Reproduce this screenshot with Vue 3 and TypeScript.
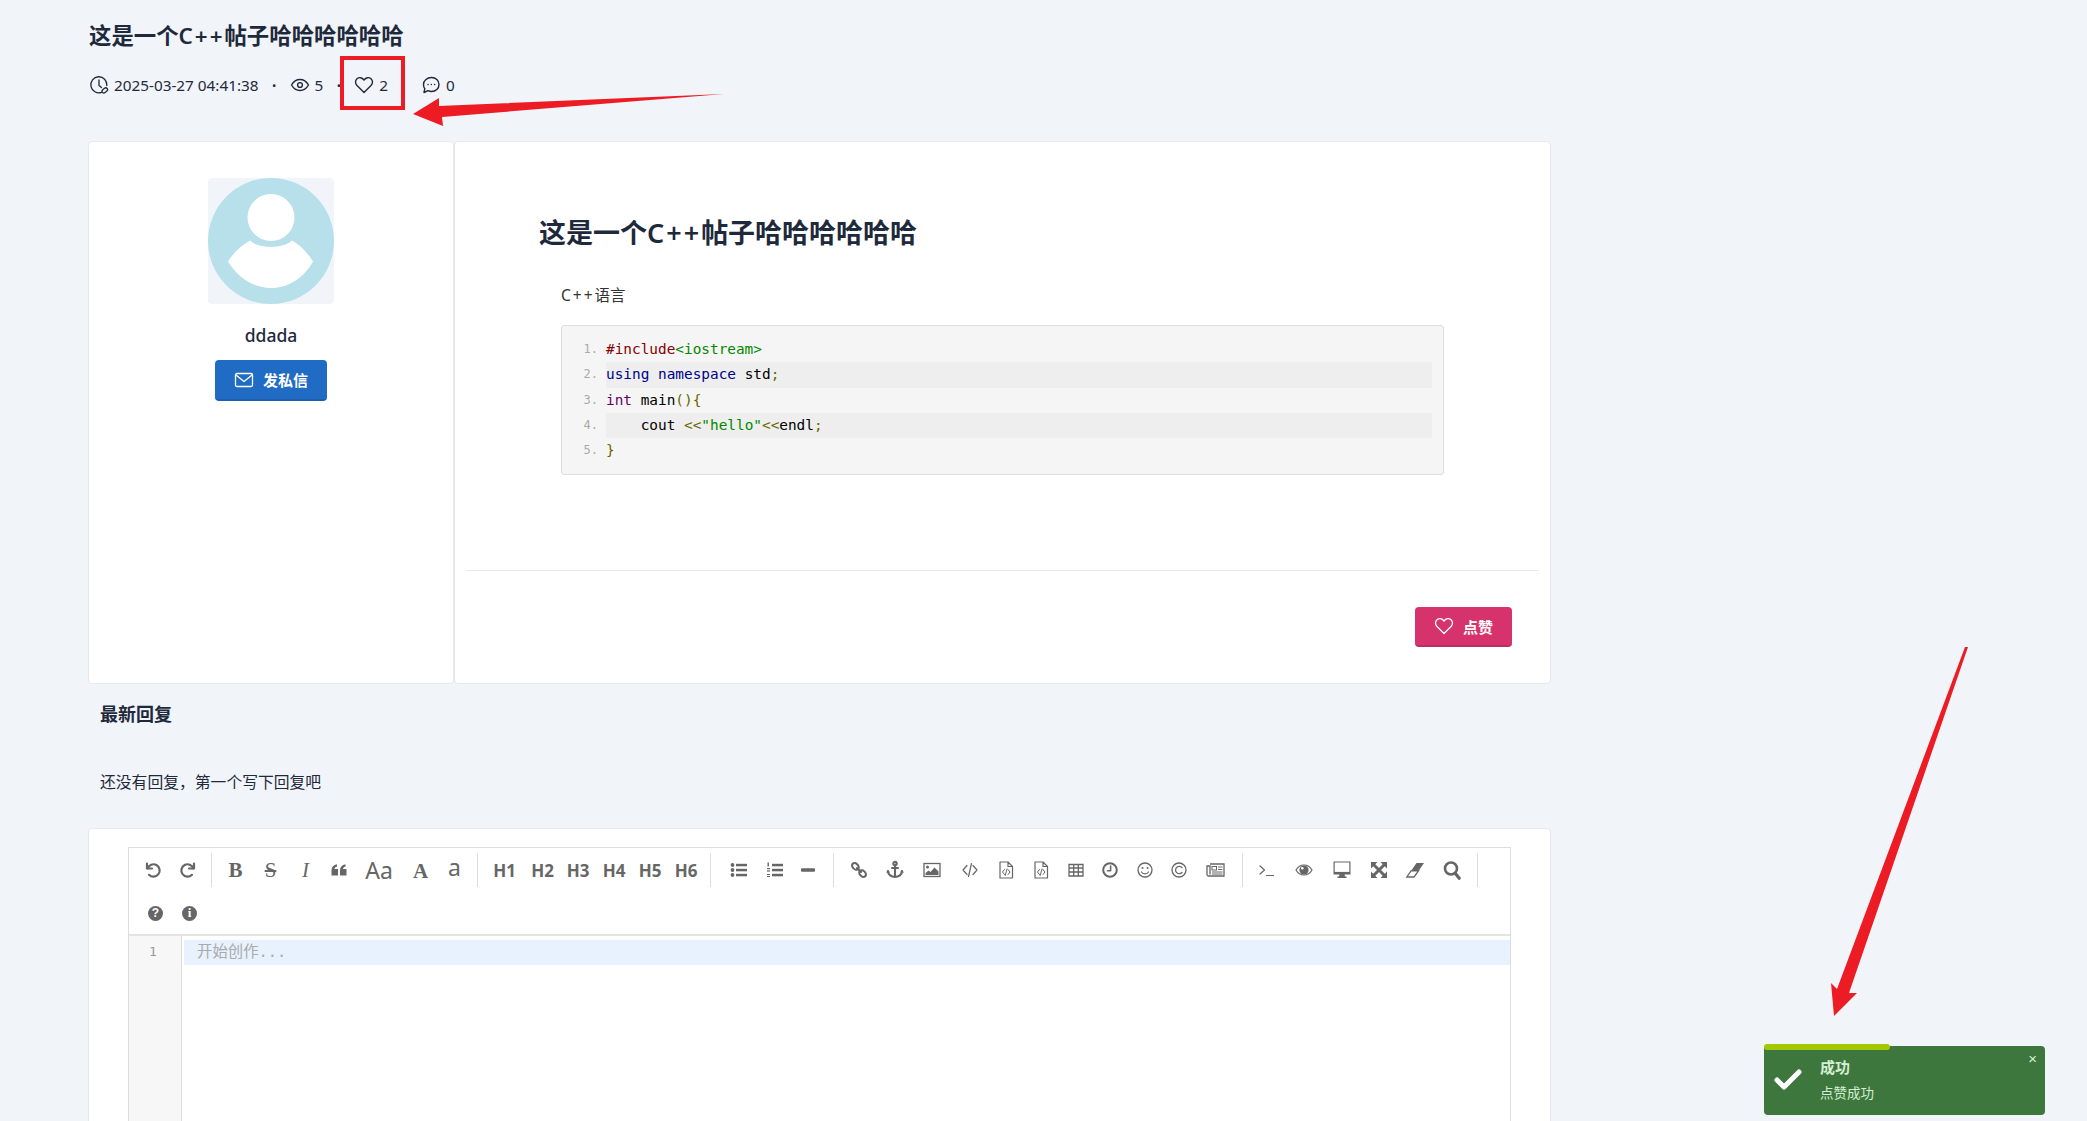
<script setup lang="ts">
interface Tool { w: number; kind: 'svg' | 'text' | 'sep'; cls?: string; label?: string; svg?: string }

const s = (w: number, svg: string): Tool => ({ w, kind: 'svg', svg })
const t = (w: number, label: string, cls: string): Tool => ({ w, kind: 'text', label, cls })
const sep: Tool = { w: 1, kind: 'sep' }

const line = 'fill="none" stroke="#666" stroke-linecap="round" stroke-linejoin="round"'
const tools: Tool[] = [
  s(35, `<path ${line} stroke-width="2.2" d="M4 3.5v5h5"/><path ${line} stroke-width="2.2" d="M4.6 8.4A6.2 6.2 0 1 1 6 14.8"/>`),
  s(35, `<path ${line} stroke-width="2.2" d="M16 3.5v5h-5"/><path ${line} stroke-width="2.2" d="M15.4 8.4A6.2 6.2 0 1 0 14 14.8"/>`),
  sep,
  t(35, 'B', 'serif bold'),
  t(35, 'S', 'serif strike'),
  t(35, 'I', 'serif italic'),
  s(32, `<path fill="#666" d="M2.5 10.5C2.5 7 4.5 4.8 8 4.2v2.2C6.3 7 5.6 7.8 5.5 9H9v6.5H2.5zM11 10.5C11 7 13 4.8 16.5 4.2v2.2c-1.7.6-2.4 1.4-2.5 2.6h3.5v6.5H11z"/>`),
  t(48, 'Aa', 'big'),
  t(35, 'A', 'serif bold upper'),
  t(33, 'a', 'big low'),
  sep,
  t(41, 'H1', 'head'),
  t(35, 'H2', 'head'),
  t(36, 'H3', 'head'),
  t(36, 'H4', 'head'),
  t(36, 'H5', 'head'),
  t(36, 'H6', 'head'),
  sep,
  s(44, `<g fill="#666"><circle cx="3.5" cy="5" r="1.9"/><circle cx="3.5" cy="10" r="1.9"/><circle cx="3.5" cy="15" r="1.9"/><rect x="7" y="3.8" width="11" height="2.5"/><rect x="7" y="8.8" width="11" height="2.5"/><rect x="7" y="13.8" width="11" height="2.5"/></g>`),
  s(28, `<g fill="#666"><rect x="2.5" y="2.5" width="1.4" height="4"/><rect x="2" y="8" width="3" height="1.2"/><rect x="2" y="10.4" width="3" height="1.2"/><rect x="2" y="14" width="3" height="1"/><rect x="2" y="16" width="3" height="1"/><rect x="7" y="3.8" width="11" height="2.5"/><rect x="7" y="8.8" width="11" height="2.5"/><rect x="7" y="13.8" width="11" height="2.5"/></g>`),
  s(38, `<rect x="3" y="8.2" width="14" height="3.6" rx="1" fill="#666"/>`),
  sep,
  s(38, `<g ${line} stroke-width="2.1"><ellipse cx="6.4" cy="6.4" rx="3.8" ry="2.8" transform="rotate(45 6.4 6.4)"/><ellipse cx="13.6" cy="13.6" rx="3.8" ry="2.8" transform="rotate(45 13.6 13.6)"/><path d="M8 8l4 4"/></g>`),
  s(34, `<g ${line} stroke-width="2.1"><circle cx="10" cy="3.6" r="1.7"/><path d="M10 5.5V17M7 8h6M3 11c0 3.8 3.4 6 7 6s7-2.200 7-6"/></g><path fill="#666" d="M1 12.500 3 10l2 2.500zM15 12.500 17 10l2 2.500z"/>`),
  s(40, `<rect x="2" y="3.500" width="16" height="13" fill="#fff" stroke="#666" stroke-width="1.300"/><circle cx="5.500" cy="7" r="1.500" fill="#666"/><path fill="#666" d="M3.500 15v-2l3-2.500 2 1.500 4-4.500 4 4V15z"/>`),
  s(36, `<path ${line} stroke-width="1.200" d="M7 5.500 3 10l4 4.500M13 5.500l4 4.500-4 4.500M11.500 3.500l-3 13"/>`),
  s(36, `<path ${line} stroke-width="1.200" d="M4 2h8l4.500 4.500V18H4zM12 2v4.500h4.500"/><path ${line} stroke-width="1" d="M8.500 9.500 6.500 12l2 2.500M12 9.500l2 2.500-2 2.500M11 9l-1.800 6.500"/>`),
  s(34, `<path ${line} stroke-width="1.200" d="M4 2h8l4.500 4.500V18H4zM12 2v4.500h4.500"/><path ${line} stroke-width="1" d="M8.500 9.500 6.500 12l2 2.500M12 9.500l2 2.500-2 2.500M11 9l-1.800 6.500"/>`),
  s(36, `<path fill="none" stroke="#666" stroke-width="1.300" d="M3 4.500h14v11.500H3zM3 8h14M3 12h14M7.700 4.500V16M12.300 4.500V16"/>`),
  s(32, `<circle cx="10" cy="10" r="6.800" fill="none" stroke="#666" stroke-width="2"/><path ${line} stroke-width="1.600" d="M10.600 6v4.800H7.500"/>`),
  s(38, `<circle cx="10" cy="10" r="7" fill="none" stroke="#666" stroke-width="1.300"/><circle cx="7.500" cy="8" r="1" fill="#666"/><circle cx="12.500" cy="8" r="1" fill="#666"/><path ${line} stroke-width="1.200" d="M6.500 12c1.500 2.500 5.500 2.500 7 0"/>`),
  s(30, `<circle cx="10" cy="10" r="7" fill="none" stroke="#666" stroke-width="1.300"/><path ${line} stroke-width="1.300" d="M13 7.500a3.700 3.700 0 1 0 0 5"/>`),
  s(42, `<path fill="none" stroke="#666" stroke-width="1.300" d="M5 4h14v12H3.500A1.500 1.500 0 0 1 2 14.500V6h3v8.500"/><rect x="7" y="6.500" width="4.500" height="3.500" fill="none" stroke="#666"/><path stroke="#666" d="M13 7h4.500M13 9.500h4.500M7 12h10.500M7 14h10.500"/>`),
  sep,
  s(36, `<path ${line} stroke-width="1.200" d="M3 6l4.500 4L3 14M9.500 15.500h7"/>`),
  s(38, `<path fill="none" stroke="#666" stroke-width="1.200" d="M2 10C4 6.500 7 5 10 5s6 1.500 8 5c-2 3.500-5 5-8 5s-6-1.500-8-5z"/><circle cx="10" cy="10" r="4.600" fill="#666"/><circle cx="8.300" cy="8.300" r="1.300" fill="#fff"/>`),
  s(38, `<path fill="#666" d="M1.500 1.500h17v13h-17zM7.500 14.500h5l.5 2h1.500v1.500h-9v-1.500H7z"/><rect x="2.700" y="2.500" width="14.600" height="9.400" fill="#fff"/>`),
  s(36, `<g fill="#666"><path d="M2 2h6.500L2 8.500zM18 2v6.500L11.500 2zM2 18v-6.500L8.500 18zM18 18h-6.500L18 11.500z"/></g><path stroke="#666" stroke-width="3" d="M4.500 4.500l11 11M15.500 4.500l-11 11"/>`),
  s(36, `<path fill="#666" d="M11.500 3H19l-5.500 8H6z"/><path fill="none" stroke="#666" stroke-width="1.300" d="M6 10.800h7.500L9 17H1.800z"/>`),
  s(38, `<circle cx="9" cy="8.500" r="6" fill="none" stroke="#666" stroke-width="2.600"/><path stroke="#666" stroke-width="3.200" stroke-linecap="round" d="M13.200 13.200l4 5"/>`),
  sep,
  t(41, '?', 'badge'),
  t(27, 'i', 'badge serif-i'),
]

interface Tok { c: string; x: string }
const code: Tok[][] = [
  [{ c: 'dec', x: '#include' }, { c: 'str', x: '<iostream>' }],
  [{ c: 'kw', x: 'using' }, { c: 'pln', x: ' ' }, { c: 'kw', x: 'namespace' }, { c: 'pln', x: ' std' }, { c: 'pun', x: ';' }],
  [{ c: 'typ', x: 'int' }, { c: 'pln', x: ' main' }, { c: 'pun', x: '(){' }],
  [{ c: 'pln', x: '    cout ' }, { c: 'pun', x: '<<' }, { c: 'str', x: '"hello"' }, { c: 'pun', x: '<<' }, { c: 'pln', x: 'endl' }, { c: 'pun', x: ';' }],
  [{ c: 'pun', x: '}' }],
]
</script>

<template>
  <div class="page">
    <header class="head-block">
      <h2 class="post-title">这是一个<span class="latin">C++</span>帖子哈哈哈哈哈哈</h2>
      <div class="meta">
        <span class="meta-item first">
          <svg class="mi" viewBox="0 0 20 20" fill="none" stroke="#1f2937" stroke-width="1.300" stroke-linecap="round"><path d="M12.500 17.300A8 8 0 1 1 17.800 10.500"/><path d="M10 5v5.500l2.500 2"/><rect x="12.800" y="13.600" width="6" height="3.600" rx="1.800" transform="rotate(-40 15.800 15.400)"/></svg>
          2025-03-27 04:41:38
        </span>
        <span class="dot">·</span>
        <span class="meta-item">
          <svg class="mi" viewBox="0 0 20 20" fill="none" stroke="#1f2937" stroke-width="1.400"><path d="M1.500 10C3.500 6.500 6.500 4.500 10 4.500S16.500 6.500 18.500 10c-2 3.500-5 5.500-8.500 5.500S3.500 13.500 1.500 10z"/><circle cx="10" cy="10" r="2.400"/></svg>
          5
        </span>
        <span class="dot">·</span>
        <span class="meta-item liked">
          <svg class="mi heart" viewBox="0 0 20 20" fill="none" stroke="#1f2937" stroke-width="1.400" stroke-linejoin="round"><path d="M10 17.500 3 10.500C1 8.500 1 5.500 3 3.700 5 2 8 2.300 10 5c2-2.700 5-3 7-1.300 2 1.800 2 4.800 0 6.800z"/></svg>
          2
        </span>
        <span class="meta-item last">
          <svg class="mi" viewBox="0 0 20 20" fill="none" stroke="#1f2937" stroke-width="1.400" stroke-linejoin="round"><path d="M10.500 2.500c4.300 0 7.500 3 7.500 7s-3.200 7-7.500 7c-1.300 0-2.400-.3-3.500-.8L3 17.500l.8-3.800C2.700 12.500 2.500 11 2.500 9.500c0-4 3.700-7 8-7z"/><path stroke-linecap="round" d="M7 9.500h.1M10.300 9.500h.1M13.600 9.500h.1"/></svg>
          0
        </span>
      </div>
    </header>

    <section class="post">
      <aside class="card author">
        <div class="avatar">
          <svg viewBox="0 0 126 126" width="126" height="126">
            <circle cx="63" cy="63" r="63" fill="#b8e0ea" />
            <circle cx="63" cy="39.500" r="23.500" fill="#fff" />
            <path fill="#fff" d="M42 62.500C50 71 76 71 84 62.500 92 67 99 74 105 83.500 96 100 80 110 63 110S30 100 20 83.500C26 74 34 67 42 62.500z" />
          </svg>
        </div>
        <div class="author-name">ddada</div>
        <button class="btn btn-blue" type="button">
          <svg class="bi" viewBox="0 0 20 20" fill="none" stroke="#fff" stroke-width="1.300" stroke-linejoin="round"><rect x="1.500" y="3.500" width="17" height="13" rx="1.500"/><path d="M2 5l8 6.500L18 5"/></svg>
          发私信
        </button>
      </aside>

      <article class="card content">
        <div class="md">
          <h1 class="md-title">这是一个<span class="latin">C++</span>帖子哈哈哈哈哈哈</h1>
          <p class="md-p"><span class="latin">C++</span>语言</p>
          <ol class="code">
            <li v-for="(row, i) in code" :key="i" class="code-row">
              <span class="ln">{{ i + 1 }}.</span>
              <span class="src"><span v-for="(tok, j) in row" :key="j" :class="tok.c">{{ tok.x }}</span></span>
            </li>
          </ol>
        </div>
        <div class="actions">
          <button class="btn btn-pink" type="button">
            <svg class="bi" viewBox="0 0 20 20" fill="none" stroke="#fff" stroke-width="1.300" stroke-linejoin="round"><path d="M10 17.500 3 10.500C1 8.500 1 5.500 3 3.700 5 2 8 2.300 10 5c2-2.700 5-3 7-1.300 2 1.800 2 4.800 0 6.800z"/></svg>
            点赞
          </button>
        </div>
      </article>
    </section>

    <h3 class="reply-title">最新回复</h3>
    <p class="reply-empty">还没有回复，第一个写下回复吧</p>

    <section class="card editor-card">
      <div class="editor">
        <div class="toolbar">
          <template v-for="(tool, i) in tools" :key="i">
            <span v-if="tool.kind === 'sep'" class="sep"></span>
            <span v-else class="tool" :style="{ width: tool.w + 'px' }">
              <svg v-if="tool.kind === 'svg'" class="ti" viewBox="0 0 20 20" v-html="tool.svg"></svg>
              <span v-else :class="tool.cls">{{ tool.label }}</span>
            </span>
          </template>
        </div>
        <div class="cm">
          <div class="gutter">1</div>
          <div class="lines">
            <div class="active">开始创作...</div>
          </div>
        </div>
      </div>
    </section>

    <div class="toast">
      <div class="progress"></div>
      <svg class="check" viewBox="0 0 28 22" fill="none" stroke="#fff" stroke-width="5" stroke-linecap="round" stroke-linejoin="round"><path d="M3 12l7 7L25 4"/></svg>
      <div class="toast-body">
        <div class="toast-title">成功</div>
        <div class="toast-msg">点赞成功</div>
      </div>
      <span class="toast-close">×</span>
    </div>

    <svg class="marks" width="2087" height="1121" viewBox="0 0 2087 1121">
      <rect x="342" y="58" width="61" height="50" fill="none" stroke="#ed1c24" stroke-width="4" />
      <polygon fill="#ed1c24" points="724,94 439,106 439,98 413,114 443,126 442,117" />
      <polygon fill="#ed1c24" points="1965,647 1968,647 1849,993 1857,993 1834,1016 1831,983 1837,989" />
    </svg>
  </div>
</template>

<style>
html, body { margin: 0; background: #f1f4f9; overflow: hidden; }
</style>

<style scoped>
.page {
  position: relative;
  height: 1121px;
  overflow: hidden;
  box-sizing: border-box;
  padding: 0 536px 0 88px;
  background: #f1f4f9;
  color: #1e293b;
  font-family: "Noto Sans", "Noto Sans CJK SC", sans-serif;
}
.head-block { height: 141px; box-sizing: border-box; padding: 20px 0 0 1px; }
.post-title { margin: 0; font-size: 22.400px; line-height: 32px; font-weight: 700; }
.post-title .latin, .md-title .latin { letter-spacing: 2px; font-weight: 600; }
.md-p .latin { letter-spacing: 2px; }
.meta { display: flex; align-items: center; margin-top: 19px; height: 28px; font-size: 15.300px; }
.meta-item { display: flex; align-items: center; gap: 5px; }
.mi { width: 20px; height: 20px; }
.dot { width: 31px; text-align: center; font-weight: 700; }
.last { margin-left: 33px; }
.post { display: grid; grid-template-columns: 366px 1fr; height: 543px; }
.card {
  box-sizing: border-box;
  background: #fff;
  border: 1px solid #e5e8ee;
  border-radius: 4px;
}
.author { display: flex; flex-direction: column; align-items: center; padding-top: 36px; }
.avatar { width: 126px; height: 126px; background: #f1f4f9; border-radius: 4px; }
.avatar svg { display: block; }
.author-name { margin-top: 17px; font-size: 17.500px; line-height: 28px; font-weight: 500; }
.btn {
  display: flex;
  align-items: center;
  justify-content: center;
  gap: 9px;
  box-sizing: border-box;
  border: 0;
  border-radius: 4px;
  color: #fff;
  font-family: inherit;
  font-size: 15px;
  font-weight: 700;
  padding: 0;
}
.bi { width: 20px; height: 20px; }
.btn-blue {
  margin-top: 11px;
  width: 112px;
  height: 41px;
  background: #206bc4;
  border-bottom: 2px solid #1c60b0;
}
.content { display: flex; flex-direction: column; padding: 0 11px; }
.md { height: 429px; box-sizing: border-box; padding: 69px 0 0 73px; border-bottom: 1px solid #e6e8eb; }
.md-title { margin: 0; font-size: 27px; line-height: 44px; font-weight: 700; color: #1e293b; }
.md-p { margin: 27px 0 0 22px; font-size: 15.500px; line-height: 26px; color: #333; }
.code {
  list-style: none;
  box-sizing: border-box;
  margin: 17px 0 0 22px;
  width: 883px;
  height: 150px;
  padding: 11px 11px 0 0;
  background: #f5f5f5;
  border: 1px solid #ddd;
  border-radius: 3px;
  font-family: "DejaVu Sans Mono", monospace;
  font-size: 14.400px;
}
.code-row { display: flex; height: 25.300px; line-height: 25.300px; }
.ln { width: 44px; flex: none; padding-right: 8px; box-sizing: border-box; text-align: right; font-size: 12px; color: #aaa; }
.src { flex: 1; white-space: pre; padding-left: 0; }
.code-row:nth-child(even) .src { background: #eee; }
.dec { color: #800; }
.str { color: #080; }
.kw { color: #008; }
.typ { color: #606; }
.pln { color: #000; }
.pun { color: #660; }
.actions { display: flex; justify-content: flex-end; padding: 36px 27px 0 0; }
.btn-pink {
  width: 97px;
  height: 40px;
  background: #d6336c;
  border-bottom: 2px solid #bf2d60;
}
.reply-title { margin: 17px 0 0 12px; font-size: 18px; line-height: 26px; font-weight: 700; }
.reply-empty { margin: 42px 0 0 12px; font-size: 15.800px; line-height: 26px; color: #1e293b; }
.editor-card { margin-top: 33px; padding: 18px 39px 0; height: 600px; }
.editor { border: 1px solid #ddd; height: 100%; box-sizing: border-box; }
.toolbar {
  display: flex;
  flex-wrap: wrap;
  align-items: center;
  align-content: flex-start;
  height: 88px;
  box-sizing: border-box;
  padding: 5px 0 0 6px;
  border-bottom: 2px solid #e4e4e4;
  color: #666;
}
.sep { width: 1px; height: 34px; margin: 0 6px 9px; background: #ddd; flex: none; }
.tool { display: flex; align-items: center; justify-content: center; height: 34px; flex: none; margin-bottom: 9px; }
.ti { width: 20px; height: 20px; }
.serif { font-family: "Liberation Serif", serif; font-size: 21px; color: #666; }
.bold { font-weight: 700; }
.strike { text-decoration: line-through; }
.italic { font-style: italic; }
.big { font-family: "Noto Sans", sans-serif; font-size: 23px; color: #666; }
.upper { font-size: 21px; position: relative; top: 1px; }
.low { position: relative; top: -3px; }
.head { font-family: "Noto Sans", sans-serif; font-size: 17px; font-weight: 700; color: #666; }
.badge {
  display: flex;
  align-items: center;
  justify-content: center;
  width: 15px;
  height: 15px;
  border-radius: 50%;
  background: #666;
  color: #fff;
  font-family: "Liberation Sans", sans-serif;
  font-size: 12px;
  font-weight: 700;
}
.serif-i { font-family: "Liberation Serif", serif; font-size: 13px; }
.cm { display: flex; height: 100%; }
.gutter {
  width: 53px;
  flex: none;
  box-sizing: border-box;
  padding: 3px 4px 0 0;
  background: #f7f7f7;
  border-right: 1px solid #ddd;
  text-align: center;
  font-family: "DejaVu Sans Mono", monospace;
  font-size: 13px;
  line-height: 25px;
  color: #999;
}
.lines { flex: 1; padding: 4px 0 0 2px; }
.active {
  height: 25px;
  line-height: 25px;
  padding-left: 13px;
  background: #e8f2fe;
  color: #aaa;
  font-family: "DejaVu Sans Mono", "Noto Sans CJK SC", monospace;
  font-size: 15.400px;
}
.toast {
  position: absolute;
  left: 1764px;
  top: 1046px;
  width: 281px;
  height: 69px;
  display: flex;
  border-radius: 4px;
  background: #3d773e;
  color: #d6efd0;
}
.progress {
  position: absolute;
  left: 0;
  top: -2px;
  width: 126px;
  height: 6px;
  border-radius: 3px;
  background: #a4c800;
}
.check { position: absolute; left: 10px; top: 22px; width: 28px; height: 22px; }
.toast-body { margin-left: 56px; padding-top: 9px; }
.toast-title { font-size: 15px; line-height: 24px; font-weight: 700; }
.toast-msg { margin-top: 4px; font-size: 13.500px; line-height: 20px; }
.toast-close { position: absolute; right: 8px; top: 4px; font-size: 15px; line-height: 18px; font-family: "Liberation Sans", sans-serif; }
.marks { position: absolute; left: 0; top: 0; pointer-events: none; }
</style>
